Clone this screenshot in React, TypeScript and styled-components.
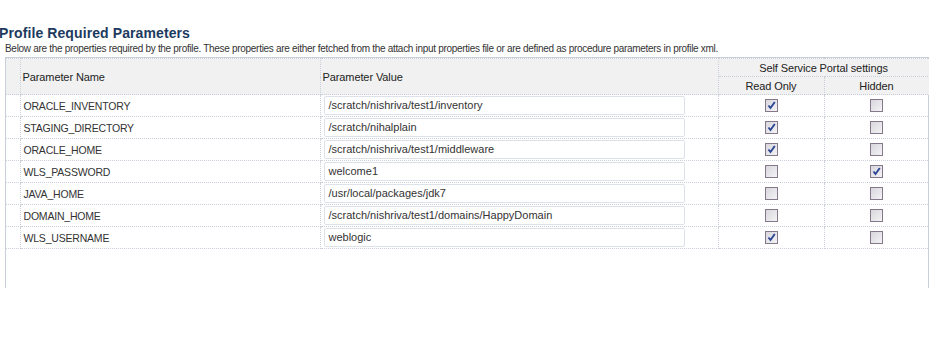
import React from "react"
import styled, { createGlobalStyle } from "styled-components"

const GlobalStyle = createGlobalStyle`
  html, body {
    margin: 0;
    padding: 0;
    background: #ffffff;
  }
  body {
    font-family: "Liberation Sans", Arial, sans-serif;
    color: #333333;
  }
`;

const Page = styled.div`
  width: 929px;
  height: 358px;
  overflow: hidden;
  padding-top: 24px;
  box-sizing: border-box;
`;

const Title = styled.h2`
  margin: 0 0 0 -1px;
  font-size: 14px;
  line-height: 18px;
  letter-spacing: 0.1px;
  font-weight: bold;
  color: #1c3a5e;
`;

const Intro = styled.p`
  margin: 0 0 0 5px;
  font-size: 10px;
  letter-spacing: -0.3px;
  line-height: 14px;
  color: #333333;
`;

const Frame = styled.div`
  margin: 1px 0 0 5px;
  width: 922px;
  height: 230px;
  border-left: 1px solid #c7cfda;
  border-right: 1px solid #c7cfda;
  border-top: 1px solid #c7cfda;
`;

const Table = styled.table`
  border-collapse: collapse;
  table-layout: fixed;
  width: 923px;
  font-size: 11px;
`;

const Head = styled.th<{ align?: string }>`
  background: #f1f1f1;
  font-weight: normal;
  color: #222222;
  text-align: ${p => p.align || "left"};
  padding: 0 2px;
  height: 17px;
  letter-spacing: -0.1px;
  border: 1px dotted #c9cfd9;
  &:first-child {
    border-left: none;
  }
`;

const Cell = styled.td<{ center?: boolean }>`
  height: 21px;
  padding: 0 2px;
  color: #333333;
  text-align: ${p => (p.center ? "center" : "left")};
  border: 1px dotted #ccd0da;
  &:first-child {
    border-left: none;
  }
`;

const NameText = styled.span`
  font-size: 10.5px;
  letter-spacing: -0.2px;
  padding-left: 1px;
`;

const ValueInput = styled.div`
  box-sizing: border-box;
  width: 361px;
  height: 19px;
  line-height: 17px;
  margin-left: 1px;
  padding-left: 4px;
  border: 1px solid #dde2ea;
  border-radius: 2px;
  color: #333333;
  background: #ffffff;
`;

const Box = styled.span`
  display: inline-block;
  box-sizing: border-box;
  width: 13px;
  height: 13px;
  vertical-align: middle;
  border: 1px solid #85788a;
  background: linear-gradient(135deg, #d6d6dc 0%, #f4f4f6 100%);
  position: relative;
  svg {
    position: absolute;
    left: 1px;
    top: 1px;
  }
`;

const Check: React.FC<{ on: boolean }> = ({ on }) => (
  <Box>
    {on && (
      <svg width="9" height="9" viewBox="0 0 9 9">
        <path d="M1.5 4.5 L3.5 7 L7.8 1" stroke="#2b4594" strokeWidth="1.9" fill="none" />
      </svg>
    )}
  </Box>
);

const rows = [
  { name: "ORACLE_INVENTORY", value: "/scratch/nishriva/test1/inventory", ro: true, hidden: false },
  { name: "STAGING_DIRECTORY", value: "/scratch/nihalplain", ro: true, hidden: false },
  { name: "ORACLE_HOME", value: "/scratch/nishriva/test1/middleware", ro: true, hidden: false },
  { name: "WLS_PASSWORD", value: "welcome1", ro: false, hidden: true },
  { name: "JAVA_HOME", value: "/usr/local/packages/jdk7", ro: false, hidden: false },
  { name: "DOMAIN_HOME", value: "/scratch/nishriva/test1/domains/HappyDomain", ro: false, hidden: false },
  { name: "WLS_USERNAME", value: "weblogic", ro: true, hidden: false },
];

export default function App() {
  return (
    <>
      <GlobalStyle />
      <Page>
        <Title>Profile Required Parameters</Title>
        <Intro>
          Below are the properties required by the profile. These properties are either fetched from the attach input properties file or are defined as procedure parameters in profile xml.
        </Intro>
        <Frame>
          <Table>
            <colgroup>
              <col style={{ width: 14 }} />
              <col style={{ width: 300 }} />
              <col style={{ width: 398 }} />
              <col style={{ width: 106 }} />
              <col style={{ width: 105 }} />
            </colgroup>
            <thead>
              <tr>
                <Head rowSpan={2} />
                <Head rowSpan={2}>Parameter Name</Head>
                <Head rowSpan={2}>Parameter Value</Head>
                <Head colSpan={2} align="center">Self Service Portal settings</Head>
              </tr>
              <tr>
                <Head align="center">Read Only</Head>
                <Head align="center">Hidden</Head>
              </tr>
            </thead>
            <tbody>
              {rows.map(r => (
                <tr key={r.name}>
                  <Cell />
                  <Cell>
                    <NameText>{r.name}</NameText>
                  </Cell>
                  <Cell>
                    <ValueInput>{r.value}</ValueInput>
                  </Cell>
                  <Cell center>
                    <Check on={r.ro} />
                  </Cell>
                  <Cell center>
                    <Check on={r.hidden} />
                  </Cell>
                </tr>
              ))}
            </tbody>
          </Table>
        </Frame>
      </Page>
    </>
  );
}
